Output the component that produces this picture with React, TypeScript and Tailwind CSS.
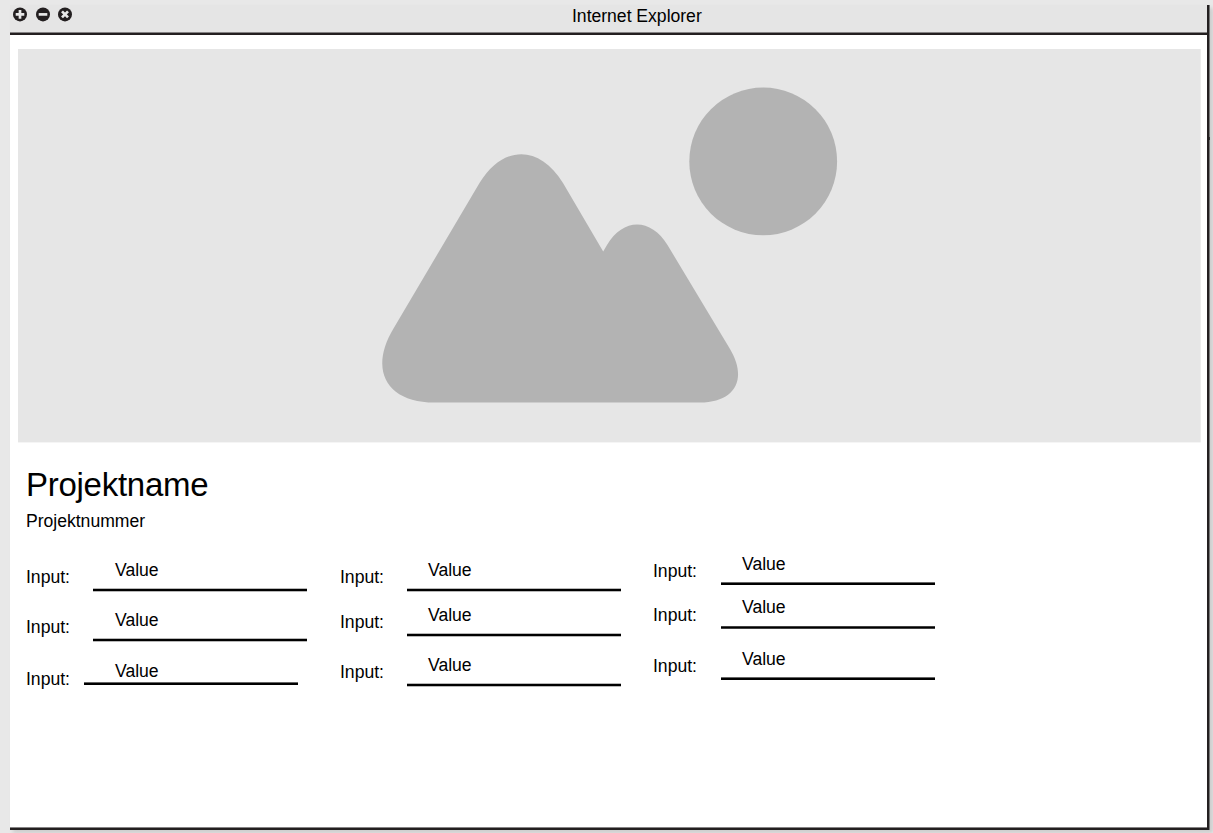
import React from "react";

type Field = { field: string; label: string; value: string; line: string };

const edge = "border-y border-[#b8b8b8]";
const topEdge = "border-t border-[#666666]";

const columns: { place: string; fields: Field[] }[] = [
  {
    place: "w-[314px]",
    fields: [
      { field: "pt-1.5", label: "pt-[7px] w-[67px]", value: "h-7 pl-[22px]", line: edge },
      { field: "pt-[18px]", label: "pt-[7px] w-[67px]", value: "h-7 pl-[22px]", line: edge },
      { field: "pt-[19px]", label: "pt-2 w-[58px]", value: "h-[21px] pl-[31px]", line: topEdge },
    ],
  },
  {
    place: "w-[313px]",
    fields: [
      { field: "pt-1.5", label: "pt-[7px] w-[67px]", value: "h-7 pl-[21px]", line: edge },
      { field: "pt-[13px]", label: "pt-[7px] w-[67px]", value: "h-7 pl-[21px]", line: edge },
      { field: "pt-[18px]", label: "pt-[7px] w-[67px]", value: "h-7 pl-[21px]", line: edge },
    ],
  },
  {
    place: "w-[314px]",
    fields: [
      { field: "", label: "pt-[7px] w-[67.5px]", value: "h-7 pl-[21.5px]", line: topEdge },
      { field: "pt-3", label: "pt-2 w-[67.5px]", value: "h-[29px] pl-[21.5px]", line: "border-y border-[#404040]" },
      { field: "pt-5", label: "pt-[7px] w-[67.5px]", value: "h-7 pl-[21.5px]", line: topEdge },
    ],
  },
];

function FieldRow({ field, label, value, line }: Field) {
  const thickness = line === edge ? "h-1" : "h-[3px]";
  return (
    <div className={`flex items-start ${field}`}>
      <div className={`shrink-0 ${label}`}>Input:</div>
      <div className="w-[214px] shrink-0">
        <div className={value}>Value</div>
        <div className={`bg-black ${thickness} ${line}`} />
      </div>
    </div>
  );
}

function WindowButton({ d }: { d: string }) {
  return (
    <svg width="14" height="15" viewBox="0 0 14 15">
      <circle cx="7" cy="7.4" r="7" fill="#231f20" />
      <path d={d} stroke="#e8e8e8" strokeWidth="2.7" fill="none" />
    </svg>
  );
}

export default function App() {
  return (
    <div className="h-[833px] w-[1213px] overflow-hidden bg-[#e8e8e8] pt-[5px] pl-[10px] font-['Liberation_Sans',Arial,sans-serif] text-[17.6px] leading-5 tracking-[-0.02px] text-black">
      <div className="relative flex h-[825px] w-[1200px] flex-col border-r-[3px] border-b-2 border-[#231f20] bg-white shadow-[3px_3px_4px_rgba(0,0,0,0.12)]">
        <header className="relative h-[30px] shrink-0 border-b-2 border-[#231f20] bg-[#e5e5e5]">
          <div className="flex gap-[8.5px] pt-[2px] pl-[3px]">
            <WindowButton d="M7 3.1V11.7M2.7 7.4H11.3" />
            <WindowButton d="M2.7 7.4H11.3" />
            <WindowButton d="M4 4.400L10 10.400M10 4.400L4 10.400" />
          </div>
          <div className="absolute top-px left-[562px]">Internet Explorer</div>
          <div className="absolute bottom-0 h-px w-full bg-[#858384]" />
        </header>
        <main className="flex-1 pt-[14px] pl-2">
          <svg className="block" width="1183" height="394" viewBox="18 49 1183 394">
            <rect x="18" y="48.7" width="1182.7" height="393.7" fill="#e6e6e6" />
            <circle cx="763.2" cy="161.4" r="73.9" fill="#b3b3b3" />
            <path
              d="M479.5 183C503 144.5 539.5 144.5 563 183L603.2 251.5L607 245C623 217.500 651 217.500 667.500 245L730 349C748 379 735 402.600 700 402.600H434.500C386.500 402.600 368.500 370 393.500 328.500Z"
              fill="#b3b3b3"
            />
          </svg>
          <h1 className="pt-[23px] pl-2 text-[33px] leading-[38px] tracking-[-0.27px]">Projektname</h1>
          <p className="pt-[7px] pl-2">Projektnummer</p>
          <div className="flex pt-[23px] pl-2">
            {columns.map((c, i) => (
              <div key={i} className={`shrink-0 ${c.place}`}>
                {c.fields.map((f, j) => (
                  <FieldRow key={j} {...f} />
                ))}
              </div>
            ))}
          </div>
        </main>
        <div className="h-px shrink-0 bg-[#858384]" />
        <div className="absolute top-0 -right-[3px] h-[825px] w-px bg-[#777777]" />
        <div className="absolute top-[132px] -right-[3px] h-[3px] w-px bg-[#333333]" />
      </div>
    </div>
  );
}
